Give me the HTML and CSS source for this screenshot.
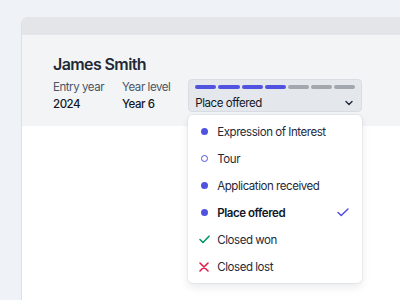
FILE: index.html
```html
<!DOCTYPE html>
<html>
  <head>
    <title>Student - James Smith</title>
    <meta name="viewport" content="width=device-width, initial-scale=1">
    <link rel="stylesheet" href="styles.css">
  </head>
  <body>
  <div class="card">
    <div class="card-bar"></div>
    <div class="card-head">
      <h1 class="name">James Smith</h1>
      <div class="meta">
        <div class="field">
          <div class="label">Entry year</div>
          <div class="value">2024</div>
        </div>
        <div class="field">
          <div class="label">Year level</div>
          <div class="value">Year 6</div>
        </div>
        <div class="stage">
          <div class="select">
            <div class="steps">
              <span class="step done"></span>
              <span class="step done"></span>
              <span class="step done"></span>
              <span class="step done"></span>
              <span class="step"></span>
              <span class="step"></span>
              <span class="step"></span>
            </div>
            <div class="select-row">
              <span>Place offered</span>
              <svg class="chevron" width="8" height="6" viewBox="0 0 8 6"><path d="M1 1.5 4 4.5 7 1.5" fill="none" stroke="#1f2937" stroke-width="1.4" stroke-linecap="round" stroke-linejoin="round"/></svg>
            </div>
          </div>
          <ul class="menu">
            <li><span class="mark"><span class="dot"></span></span>Expression of Interest</li>
            <li><span class="mark"><span class="dot ring"></span></span>Tour</li>
            <li><span class="mark"><span class="dot"></span></span>Application received</li>
            <li class="current"><span class="mark"><span class="dot"></span></span>Place offered
              <svg class="tick" width="12" height="9" viewBox="0 0 12 9"><path d="M1 4.5 4.2 7.6 11 1" fill="none" stroke="#4f46e5" stroke-width="1.4" stroke-linecap="round" stroke-linejoin="round"/></svg>
            </li>
            <li><span class="mark"><svg width="11" height="9" viewBox="0 0 11 9"><path d="M1 4.5 4 7.5 10 1.2" fill="none" stroke="#059669" stroke-width="1.6" stroke-linecap="round" stroke-linejoin="round"/></svg></span>Closed won</li>
            <li><span class="mark"><svg width="10" height="10" viewBox="0 0 10 10"><path d="M1 1 9 9M9 1 1 9" fill="none" stroke="#e11d48" stroke-width="1.6" stroke-linecap="round"/></svg></span>Closed lost</li>
          </ul>
        </div>
      </div>
    </div>
  </div>
  </body>
</html>
```

FILE: styles.css
```css
* {
  box-sizing: border-box;
  margin: 0px;
  padding: 0px;
}
html, body {
  height: 100%;
  overflow: hidden;
}
body {
  font-family: "Inter", "Liberation Sans", sans-serif;
  color: #1f2937;
  background-color: #eff2f6;
}
.card {
  margin: 18px 0 0 22px;
  width: 420px;
  height: 320px;
  background-color: white;
  border-radius: 5px 0 0 0;
  box-shadow: 0 0 0 1px rgba(15,23,42,0.05), 0 1px 3px rgba(15,23,42,0.08);
}
.card-bar {
  height: 17px;
  background-color: #e3e5e9;
  border-radius: 5px 0 0 0;
}
.card-head {
  height: 91px;
  padding: 19px 0 0 31px;
  background-color: #f3f4f6;
}
.name {
  font-size: 16px;
  line-height: 20px;
  font-weight: 600;
  letter-spacing: -0.6px;
  color: #1f2937;
}
.meta {
  display: flex;
  align-items: flex-start;
  margin-top: 5px;
}
.field {
  margin-right: 18px;
  font-size: 11.5px;
  line-height: 17px;
  letter-spacing: -0.45px;
}
.label {
  color: #4b5563;
}
.value {
  font-weight: 500;
  color: #111827;
}
.stage {
  width: 174px;
}
.select {
  height: 33px;
  padding: 5px 6px 0 6px;
  background-color: #e4e7ec;
  border: 1px solid #d9dce2;
  border-radius: 4px;
}
.steps {
  display: flex;
  gap: 2px;
}
.step {
  flex: 1;
  height: 4px;
  border-radius: 2px;
  background-color: #a3a7ae;
}
.step.done {
  background-color: #5052e0;
}
.select-row {
  display: flex;
  align-items: center;
  justify-content: space-between;
  margin-top: 6px;
  font-size: 11.5px;
  line-height: 16px;
  letter-spacing: -0.45px;
  color: #111827;
}
.chevron {
  margin-right: 2px;
}
.menu {
  list-style: none;
  margin-top: 3px;
  padding: 3px 0;
  background-color: white;
  border-radius: 5px;
  box-shadow: 0 0 0 1px rgba(15,23,42,0.05), 0 4px 10px rgba(15,23,42,0.09);
}
.menu li {
  display: flex;
  align-items: center;
  height: 27px;
  padding-left: 10px;
  font-size: 11.5px;
  letter-spacing: -0.45px;
  color: #1f2937;
}
.menu li.current {
  font-weight: 600;
  color: #111827;
}
.mark {
  display: flex;
  align-items: center;
  justify-content: center;
  width: 12px;
  margin-right: 7px;
}
.dot {
  width: 7px;
  height: 7px;
  border-radius: 50%;
  background-color: #5052e0;
}
.dot.ring {
  background-color: white;
  border: 1.5px solid #5052e0;
}
.tick {
  margin-left: auto;
  margin-right: 13px;
}
```
